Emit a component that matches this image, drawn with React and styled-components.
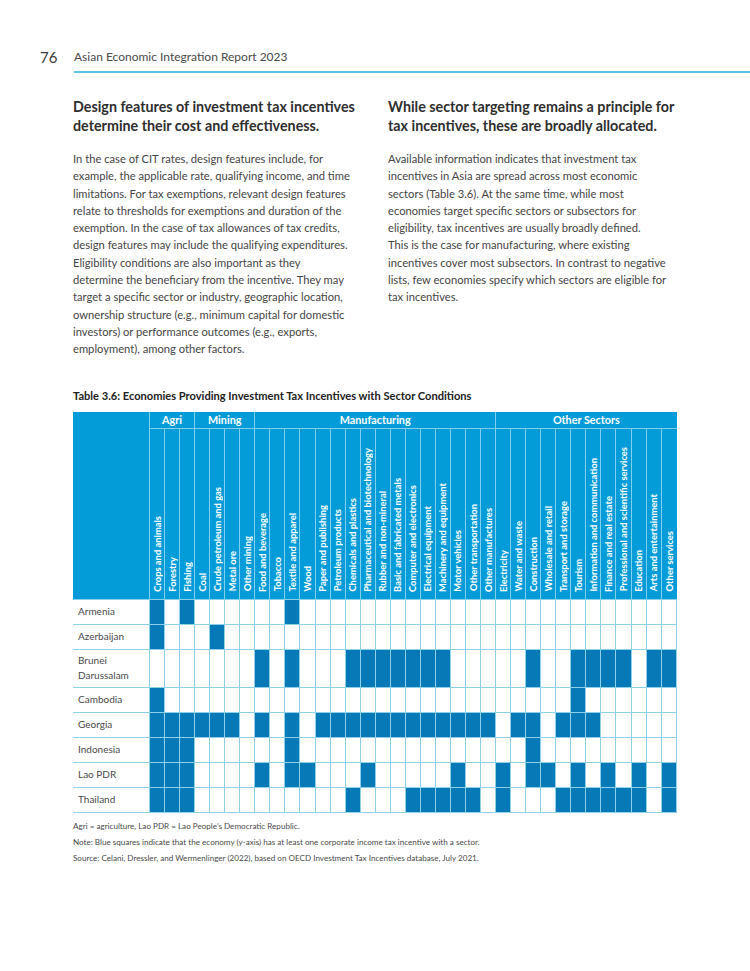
import React from 'react'
import styled, { createGlobalStyle } from 'styled-components'

const GlobalStyle = createGlobalStyle`
  body {
    margin: 0;
    background: #fff;
    font-family: Lato, "Open Sans", sans-serif;
    color: #3d3d3d;
  }
`

const Page = styled.div`
  width: 750px;
  min-height: 971px;
  padding-top: 49px;
  box-sizing: border-box;
`

const RunningHead = styled.header`
  display: flex;
  align-items: flex-end;
  padding-left: 40px;
`

const PageNum = styled.span`
  width: 34px;
  font-size: 15px;
  line-height: 16px;
  color: #3a3a3a;
  padding-bottom: 8px;
`

const ReportTitle = styled.div`
  flex: 1;
  font-size: 12px;
  line-height: 16px;
  color: #4a4a4a;
  padding-bottom: 6px;
  border-bottom: 2px solid #5cc3e6;
`

const Columns = styled.section`
  display: grid;
  grid-template-columns: 292px 292px;
  column-gap: 23px;
  padding: 24px 0 0 73px;
`

const Heading = styled.h2`
  margin: 0 0 15px 0;
  font-size: 14.3px;
  line-height: 19px;
  font-weight: 700;
  color: #2e2e2e;
`

const Para = styled.p`
  margin: 0;
  font-size: 11.2px;
  line-height: 17.3px;
  color: #454545;
  white-space: nowrap;
`

const TableBlock = styled.section`
  padding: 31px 0 0 73px;
`

const TableTitle = styled.h3`
  margin: 0 0 9px 0;
  font-size: 11.1px;
  line-height: 14px;
  font-weight: 700;
  color: #222;
`

const Grid = styled.table`
  width: 604px;
  border-collapse: collapse;
  table-layout: fixed;
`

const Corner = styled.th`
  width: 74px;
  background: #049cd8;
  border-right: 1px solid #7fd0ee;
`

const GroupHead = styled.th`
  height: 16px;
  padding: 0;
  background: #049cd8;
  color: #fff;
  font-size: 10.8px;
  font-weight: 700;
  text-align: center;
  border: 1px solid #7fd0ee;
  border-top: none;
  &:last-child {
    border-right: none;
  }
`

const SectorHead = styled.th`
  height: 166px;
  padding: 0 0 4px 0;
  background: #049cd8;
  vertical-align: bottom;
  text-align: center;
  border-left: 1px solid #7fd0ee;
  &:last-child {
    border-right: none;
  }
`

const SectorLabel = styled.span`
  display: inline-block;
  writing-mode: vertical-rl;
  transform: rotate(180deg);
  white-space: nowrap;
  color: #fff;
  font-size: 9.4px;
  line-height: 13px;
  font-weight: 700;
`

const Row = styled.tr`
  height: ${p => (p.$tall ? 38 : 25)}px;
`

const Economy = styled.td`
  padding: 0 0 0 5px;
  font-size: 10px;
  line-height: 15px;
  color: #4a4a4a;
  border-top: 1px solid #8dd0ea;
  border-bottom: 1px solid #8dd0ea;
`

const Cell = styled.td`
  padding: 0;
  border: 1px solid #8dd0ea;
  background: ${p => (p.$on ? '#0779b7' : '#fff')};
`

const Notes = styled.div`
  margin-top: 5px;
  font-size: 8.1px;
  line-height: 16px;
  color: #4a4a4a;
`

const groups = [
  { name: 'Agri', span: 3 },
  { name: 'Mining', span: 4 },
  { name: 'Manufacturing', span: 16 },
  { name: 'Other Sectors', span: 12 },
]

const sectors = [
  'Crops and animals', 'Forestry', 'Fishing',
  'Coal', 'Crude petroleum and gas', 'Metal ore', 'Other mining',
  'Food and beverage', 'Tobacco', 'Textile and apparel', 'Wood',
  'Paper and publishing', 'Petroleum products', 'Chemicals and plastics',
  'Pharmaceutical and biotechnology', 'Rubber and non-mineral',
  'Basic and fabricated metals', 'Computer and electronics',
  'Electrical equipment', 'Machinery and equipment', 'Motor vehicles',
  'Other transportation', 'Other manufactures',
  'Electricity', 'Water and waste', 'Construction', 'Wholesale and retail',
  'Transport and storage', 'Tourism', 'Information and communication',
  'Finance and real estate', 'Professional and scientific services',
  'Education', 'Arts and entertainment', 'Other services',
]

// indices of sectors with at least one CIT incentive
const economies = [
  { name: 'Armenia', on: [0, 2, 9] },
  { name: 'Azerbaijan', on: [0, 4] },
  { name: ['Brunei', 'Darussalam'], tall: true, on: [7, 9, 13, 14, 15, 16, 17, 18, 19, 25, 28, 29, 30, 31, 33, 34] },
  { name: 'Cambodia', on: [0, 28] },
  { name: 'Georgia', on: [0, 1, 2, 3, 4, 5, 7, 9, 11, 12, 13, 14, 15, 16, 17, 18, 19, 20, 21, 22, 24, 25, 27, 28, 29] },
  { name: 'Indonesia', on: [0, 1, 2, 9, 25] },
  { name: 'Lao PDR', on: [0, 1, 2, 7, 9, 10, 14, 20, 23, 25, 26, 28, 30, 32, 34] },
  { name: 'Thailand', on: [0, 1, 2, 13, 17, 18, 19, 20, 21, 23, 27, 28, 29, 30, 31, 32, 34] },
]

const Lines = ({ lines }) =>
  lines.map((l, i) => (
    <React.Fragment key={i}>
      {l}
      {i < lines.length - 1 && <br />}
    </React.Fragment>
  ))

const left = [
  'In the case of CIT rates, design features include, for',
  'example, the applicable rate, qualifying income, and time',
  'limitations. For tax exemptions, relevant design features',
  'relate to thresholds for exemptions and duration of the',
  'exemption. In the case of tax allowances of tax credits,',
  'design features may include the qualifying expenditures.',
  'Eligibility conditions are also important as they',
  'determine the beneficiary from the incentive. They may',
  'target a specific sector or industry, geographic location,',
  'ownership structure (e.g., minimum capital for domestic',
  'investors) or performance outcomes (e.g., exports,',
  'employment), among other factors.',
]

const right = [
  'Available information indicates that investment tax',
  'incentives in Asia are spread across most economic',
  'sectors (Table 3.6). At the same time, while most',
  'economies target specific sectors or subsectors for',
  'eligibility, tax incentives are usually broadly defined.',
  'This is the case for manufacturing, where existing',
  'incentives cover most subsectors. In contrast to negative',
  'lists, few economies specify which sectors are eligible for',
  'tax incentives.',
]

const App = () => {
  return (
    <Page>
      <GlobalStyle />
      <RunningHead>
        <PageNum>76</PageNum>
        <ReportTitle>Asian Economic Integration Report 2023</ReportTitle>
      </RunningHead>

      <Columns>
        <article>
          <Heading>
            Design features of investment tax incentives
            <br />
            determine their cost and effectiveness.
          </Heading>
          <Para><Lines lines={left} /></Para>
        </article>
        <article>
          <Heading>
            While sector targeting remains a principle for
            <br />
            tax incentives, these are broadly allocated.
          </Heading>
          <Para><Lines lines={right} /></Para>
        </article>
      </Columns>

      <TableBlock>
        <TableTitle>
          Table 3.6: Economies Providing Investment Tax Incentives with Sector Conditions
        </TableTitle>
        <Grid>
          <thead>
            <tr>
              <Corner rowSpan={2} />
              {groups.map(g => (
                <GroupHead key={g.name} colSpan={g.span}>{g.name}</GroupHead>
              ))}
            </tr>
            <tr>
              {sectors.map(s => (
                <SectorHead key={s}>
                  <SectorLabel>{s}</SectorLabel>
                </SectorHead>
              ))}
            </tr>
          </thead>
          <tbody>
            {economies.map(e => (
              <Row key={String(e.name)} $tall={e.tall}>
                <Economy>
                  {Array.isArray(e.name) ? <Lines lines={e.name} /> : e.name}
                </Economy>
                {sectors.map((s, i) => (
                  <Cell key={s} $on={e.on.includes(i)} />
                ))}
              </Row>
            ))}
          </tbody>
        </Grid>
        <Notes>
          <div>Agri = agriculture, Lao PDR = Lao People’s Democratic Republic.</div>
          <div>Note: Blue squares indicate that the economy (y-axis) has at least one corporate income tax incentive with a sector.</div>
          <div>Source: Celani, Dressler, and Wermenlinger (2022), based on OECD Investment Tax Incentives database, July 2021.</div>
        </Notes>
      </TableBlock>
    </Page>
  )
}

export default App
